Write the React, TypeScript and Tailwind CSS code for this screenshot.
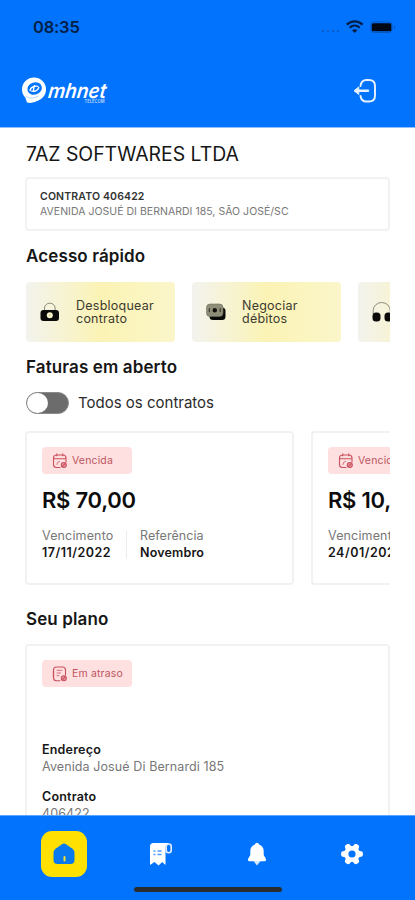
import type { ReactNode } from 'react';

const FONT = "font-['Inter','Liberation_Sans',sans-serif]";

function Logo() {
  return (
    <svg width="88" height="32" viewBox="0 0 88 32" fill="none">
      <ellipse cx="12" cy="14.400" rx="12" ry="11.800" fill="#fff" />
      <path d="M2.500 20 5 27.500q6 1.500 12-2.500Z" fill="#fff" />
      <ellipse cx="12.600" cy="13.500" rx="7.400" ry="6" transform="rotate(-18 12.600 13.500)" fill="#0273fd" />
      <path
        d="M8 16c0-3.800 5-5.500 8.500-4.500M9 16c3 1 7 0 8-4M12.500 10l-1.500 7"
        stroke="#fff"
        strokeWidth="1.300"
      />
      <path d="M3.500 21c4 3 9 2.500 13 0" stroke="#9cc8ff" strokeWidth=".8" />
      <text
        transform="translate(25.500 23) skewX(-8)"
        textLength="58"
        lengthAdjust="spacingAndGlyphs"
        fill="#fff"
        fontSize="20.500"
        fontStyle="italic"
        fontWeight="600"
        fontFamily="Inter, sans-serif"
      >
        mhnet
      </text>
      <text
        x="62.500"
        y="27.500"
        textLength="20"
        lengthAdjust="spacingAndGlyphs"
        fill="#b9d8ff"
        fontSize="5"
        fontWeight="600"
        fontFamily="Inter, sans-serif"
      >
        TELECOM
      </text>
    </svg>
  );
}

function LogoutIcon() {
  return (
    <svg width="24" height="26" viewBox="0 0 24 26" fill="none" stroke="#e8f2ff" strokeWidth="1.900" strokeLinecap="round">
      <path d="M7.500 8C8 4 10 2 13.500 2h2.500c4 0 6 2 6 6v9.500c0 4-2 6-6 6h-2.500c-3.500 0-5.500-2-6-5.500" />
      <path d="M15 12.700H3" strokeWidth="2.400" />
      <path d="M5.500 9.200 1 12.700l4.500 3.500z" fill="#e8f2ff" strokeWidth="1" strokeLinejoin="round" />
    </svg>
  );
}

function StatusIcons() {
  return (
    <svg width="76" height="16" viewBox="0 0 76 16" fill="none">
      <g fill="#0a55b8">
        <circle cx="2" cy="12" r="1" />
        <circle cx="7" cy="12" r="1" />
        <circle cx="12" cy="12" r="1" />
        <circle cx="17" cy="12" r="1" />
      </g>
      <g stroke="#031f47" strokeWidth="2.200">
        <path d="M25.800 5.600c4.600-4.400 11.200-4.400 15.800 0" />
        <path d="M28.700 8.700c3-2.800 7-2.800 10 0" />
      </g>
      <path d="M31 11.300c1.600-1.500 3.800-1.500 5.400 0L33.700 14z" fill="#031f47" />
      <rect x="50" y="3" width="21" height="10.500" rx="2.800" stroke="#0457bd" />
      <rect x="50.800" y="4.200" width="19.500" height="8" rx="1.500" fill="#000814" />
      <path d="M73 6.500c1.600.5 1.600 3 0 3.500z" fill="#0457bd" />
    </svg>
  );
}

function LockIcon() {
  return (
    <svg width="20" height="20" viewBox="0 0 20 20" fill="none">
      <path d="M4.500 8V6a5.300 4.800 0 0 1 10.600 0v2" stroke="#8b8c7c" strokeWidth="1" />
      <rect x=".500" y="8" width="18.500" height="11" rx="3" fill="#0a0a08" />
      <circle cx="9.800" cy="13.300" r="3" fill="#f8f3cc" />
      <circle cx="9.800" cy="13.300" r="1" fill="#d8d3a8" />
    </svg>
  );
}

function MoneyIcon() {
  return (
    <svg width="20" height="18" viewBox="0 0 20 18" fill="none">
      <rect x="3.500" y="4.500" width="16" height="12.500" rx="3.500" fill="#0a0a08" />
      <rect x=".500" y="1" width="16.500" height="12.500" rx="3.500" fill="#8e8d78" stroke="#6f6e5e" strokeWidth=".6" />
      <circle cx="8.800" cy="7.200" r="2.200" fill="#11110d" />
      <path d="M3.300 5.300v3.800M14.200 5.300v3.800" stroke="#2a2a22" strokeWidth="1" />
    </svg>
  );
}

function HeadphonesIcon() {
  return (
    <svg width="20" height="22" viewBox="0 0 20 22" fill="none">
      <path d="M1.200 13V9.500a8.500 8 0 0 1 17 0V13" stroke="#8b8c7c" strokeWidth="1" />
      <rect x=".500" y="11.500" width="8" height="9" rx="3.500" fill="#0a0a08" />
      <rect x="12.500" y="11.500" width="7.500" height="9" rx="3.500" fill="#0a0a08" />
    </svg>
  );
}

function CalendarIcon() {
  return (
    <svg width="16" height="16" viewBox="0 0 16 16" fill="none" stroke="#c9505c" strokeWidth="1.100" strokeLinecap="round">
      <path d="M8 14.500H4.500C2.500 14.500 1.500 13.500 1.500 11.500V5C1.500 3 2.500 2 4.500 2h6.500c2 0 3 1 3 3v4M1.500 5.800H14M4.800.800v2M10.800.800v2" />
      <path d="m5 11.500.5-2 2-1" strokeWidth=".8" />
      <circle cx="11.800" cy="12" r="2.500" fill="#e49aa1" />
      <path d="m10.500 13.300 2.600-2.600" />
    </svg>
  );
}

function DocumentIcon() {
  return (
    <svg width="16" height="16" viewBox="0 0 16 16" fill="none" stroke="#c9505c" strokeWidth="1.100" strokeLinecap="round">
      <path d="M8 14.800H4.500c-2 0-3-1-3-3V4c0-2 1-3 3-3h6c2 0 3 1 3 3v5" />
      <path d="M5 4.300h5M5 7h3.500M5 9.700h2" strokeWidth=".8" />
      <path d="M1.500 5v6" strokeWidth="1.300" />
      <circle cx="11.800" cy="12.300" r="2.500" fill="#e49aa1" />
      <path d="m10.500 13.600 2.600-2.600" />
    </svg>
  );
}

function Heading({ children }: { children: ReactNode }) {
  return <h2 className="text-[17px] leading-5 font-semibold tracking-[0.12px] text-[#161616]">{children}</h2>;
}

function QuickCard({ icon, label }: { icon: ReactNode; label: ReactNode }) {
  return (
    <div className="flex h-[60px] w-[149px] shrink-0 items-center rounded-[4px] bg-linear-to-r from-[#f3f3ee] via-[#fbf3b4] to-[#fbf6ca] pl-3.5">
      <div className="flex w-9 shrink-0">{icon}</div>
      <p className="text-[12.500px] leading-[13px] tracking-[0.24px] text-[#3c3b30]">{label}</p>
    </div>
  );
}

function Badge({ icon, label }: { icon: ReactNode; label: string }) {
  return (
    <div className="flex h-[27px] w-[90px] items-center gap-1 rounded-[4px] bg-[#ffe0e1] pl-2.5">
      {icon}
      <span className="text-[10.500px] leading-4 tracking-[0.15px] whitespace-nowrap text-[#bd5560]">{label}</span>
    </div>
  );
}

function InvoiceCard({ amount, due, reference }: { amount: string; due: string; reference: string }) {
  return (
    <div className="h-[154px] w-[269px] shrink-0 rounded-[4px] border-2 border-[#f2f2f2] px-[15px] pt-[14px]">
      <Badge icon={<CalendarIcon />} label="Vencida" />
      <p className="mt-3 text-[22px] leading-7 font-semibold tracking-[-0.25px] text-[#0c0c0c]">{amount}</p>
      <div className="mt-[13px] flex text-[12.500px] leading-[17px]">
        <div className="w-[84px]">
          <p className="tracking-[0.15px] text-[#777]">Vencimento</p>
          <p className="font-semibold tracking-[0.5px] text-[#161616]">{due}</p>
        </div>
        <div className="mt-1 h-7 w-px bg-[#ececec]" />
        <div className="pl-[13px]">
          <p className="tracking-[0.05px] text-[#777]">Referência</p>
          <p className="font-semibold tracking-[0.18px] text-[#161616]">{reference}</p>
        </div>
      </div>
    </div>
  );
}

function BottomNav() {
  return (
    <nav className="flex h-[85px] shrink-0 flex-col items-center border-t border-[#5ba4ff] bg-[#0273fd]">
      <div className="flex h-[75px] w-full shrink-0 items-center pl-[41px]">
        <div className="flex h-[46px] w-[46px] items-center justify-center rounded-[11px] bg-[#ffe000]">
          <svg width="22" height="22" viewBox="0 0 22 22">
            <path d="M9 1.200q2-1.400 4 0l6.500 4.500Q21.500 7.200 21.500 9.500V17q0 4-4 4h-13q-4 0-4-4V9.500Q.500 7.200 2.500 5.700Z" fill="#0879ef" />
            <path d="M11.500 14v3.500" stroke="#f5df31" strokeWidth="2" strokeLinecap="round" />
          </svg>
        </div>
        <svg className="ml-[62px]" width="24" height="24" viewBox="0 0 24 24" fill="none">
          <path d="M1 4.500q0-3.500 3.500-3.500h15l-3 4v18l-3.300-3-3.600 3.500L5.500 20 1 23Z" fill="#fff" />
          <rect x="17.200" y="2" width="5" height="8.800" rx="2.500" fill="#0273fd" stroke="#e2efff" strokeWidth="1.600" />
          <path d="M4.500 9h2M8.500 9h4M4.500 12.500h2M8.500 12.500h4" stroke="#4d9dff" strokeWidth="1.500" />
        </svg>
        <svg className="ml-[74px]" width="20" height="24" viewBox="0 0 20 24" fill="#fff">
          <path d="M10 .8c1.200 0 1.800.8 2 1.700 3 .9 4.700 3.300 4.700 6.500v4l2 3.500c.8 1.600 0 2.700-1.700 2.700H3c-1.700 0-2.500-1.100-1.700-2.700l2-3.500V9c0-3.200 1.700-5.600 4.700-6.500.2-.9.800-1.700 2-1.700Z" />
          <path d="M6.500 19h7L10 23.500Z" fill="#d5e8ff" />
        </svg>
        <svg className="ml-[73px]" width="24" height="24" viewBox="0 0 24 24" fill="#fff">
          <g stroke="#fff" strokeWidth="6" strokeLinecap="round">
            <path d="M4 12h16M8 5l8 14M16 5 8 19" />
          </g>
          <circle cx="12" cy="12" r="8" />
          <circle cx="12" cy="12" r="3.600" fill="#0273fd" />
        </svg>
      </div>
      <div className="-mt-1 h-[5px] w-[148px] shrink-0 rounded-full bg-[#292d2f]" />
    </nav>
  );
}

export default function App() {
  return (
    <div className={`${FONT} flex h-[900px] w-[415px] flex-col overflow-hidden bg-white`}>
      <header className="h-32 shrink-0 border-b border-[#8fc1ff] bg-[#0273fd]">
        <div className="flex h-[54px] items-center justify-between pr-[18px] pl-[33px]">
          <span className="text-[16.500px] leading-5 font-semibold tracking-[-0.2px] text-[#031f47]">08:35</span>
          <StatusIcons />
        </div>
        <div className="flex h-[73px] items-center justify-between pr-[38px] pl-[22px]">
          <Logo />
          <LogoutIcon />
        </div>
      </header>

      <main className="min-h-0 flex-1 overflow-hidden px-[25px]">
        <h1 className="mt-[14px] pl-px text-[19.400px] leading-6 text-[#161616]">7AZ SOFTWARES LTDA</h1>

        <div className="mt-[11px] h-[54px] rounded-[4px] border-2 border-[#f2f2f2] px-[13px] pt-[10px]">
          <p className="text-[10.500px] leading-[15px] font-semibold tracking-[0.15px] text-[#333]">CONTRATO 406422</p>
          <p className="text-[10.500px] leading-[15px] tracking-[0.03px] text-[#777]">AVENIDA JOSUÉ DI BERNARDI 185, SÃO JOSÉ/SC</p>
        </div>

        <div className="mt-[15px] pl-px">
          <Heading>Acesso rápido</Heading>
        </div>
        <div className="mt-4 flex gap-[17px] overflow-hidden pl-px">
          <QuickCard icon={<LockIcon />} label={<>Desbloquear<br />contrato</>} />
          <QuickCard icon={<MoneyIcon />} label={<>Negociar<br />débitos</>} />
          <QuickCard icon={<HeadphonesIcon />} label={<>Suporte<br />técnico</>} />
        </div>

        <div className="mt-[15px] pl-px">
          <Heading>Faturas em aberto</Heading>
        </div>
        <div className="mt-[15px] flex items-center gap-[9px] pl-px">
          <div className="flex h-[22px] w-[43px] items-center rounded-full border border-[#8a8a8a] bg-[#6c6c6c]">
            <div className="h-5 w-[21px] rounded-full bg-white" />
          </div>
          <span className="text-[15px] leading-5 text-[#2b2b2b]">Todos os contratos</span>
        </div>

        <div className="mt-[17px] flex gap-[17px] overflow-hidden">
          <InvoiceCard amount="R$ 70,00" due="17/11/2022" reference="Novembro" />
          <InvoiceCard amount="R$ 10,00" due="24/01/2023" reference="Janeiro" />
        </div>

        <div className="mt-6 pl-px">
          <Heading>Seu plano</Heading>
        </div>
        <div className="mt-[15px] h-[260px] rounded-[4px] border-2 border-[#f2f2f2] px-[15px] pt-[14px] text-[12.500px] leading-[17px] tracking-[0.1px]">
          <Badge icon={<DocumentIcon />} label="Em atraso" />
          <p className="mt-[54px] font-semibold tracking-[0.2px] text-[#161616]">Endereço</p>
          <p className="text-[#777]">Avenida Josué Di Bernardi 185</p>
          <p className="mt-[13px] font-semibold tracking-[0.2px] text-[#161616]">Contrato</p>
          <p className="text-[#777]">406422</p>
        </div>
      </main>

      <BottomNav />
    </div>
  );
}
